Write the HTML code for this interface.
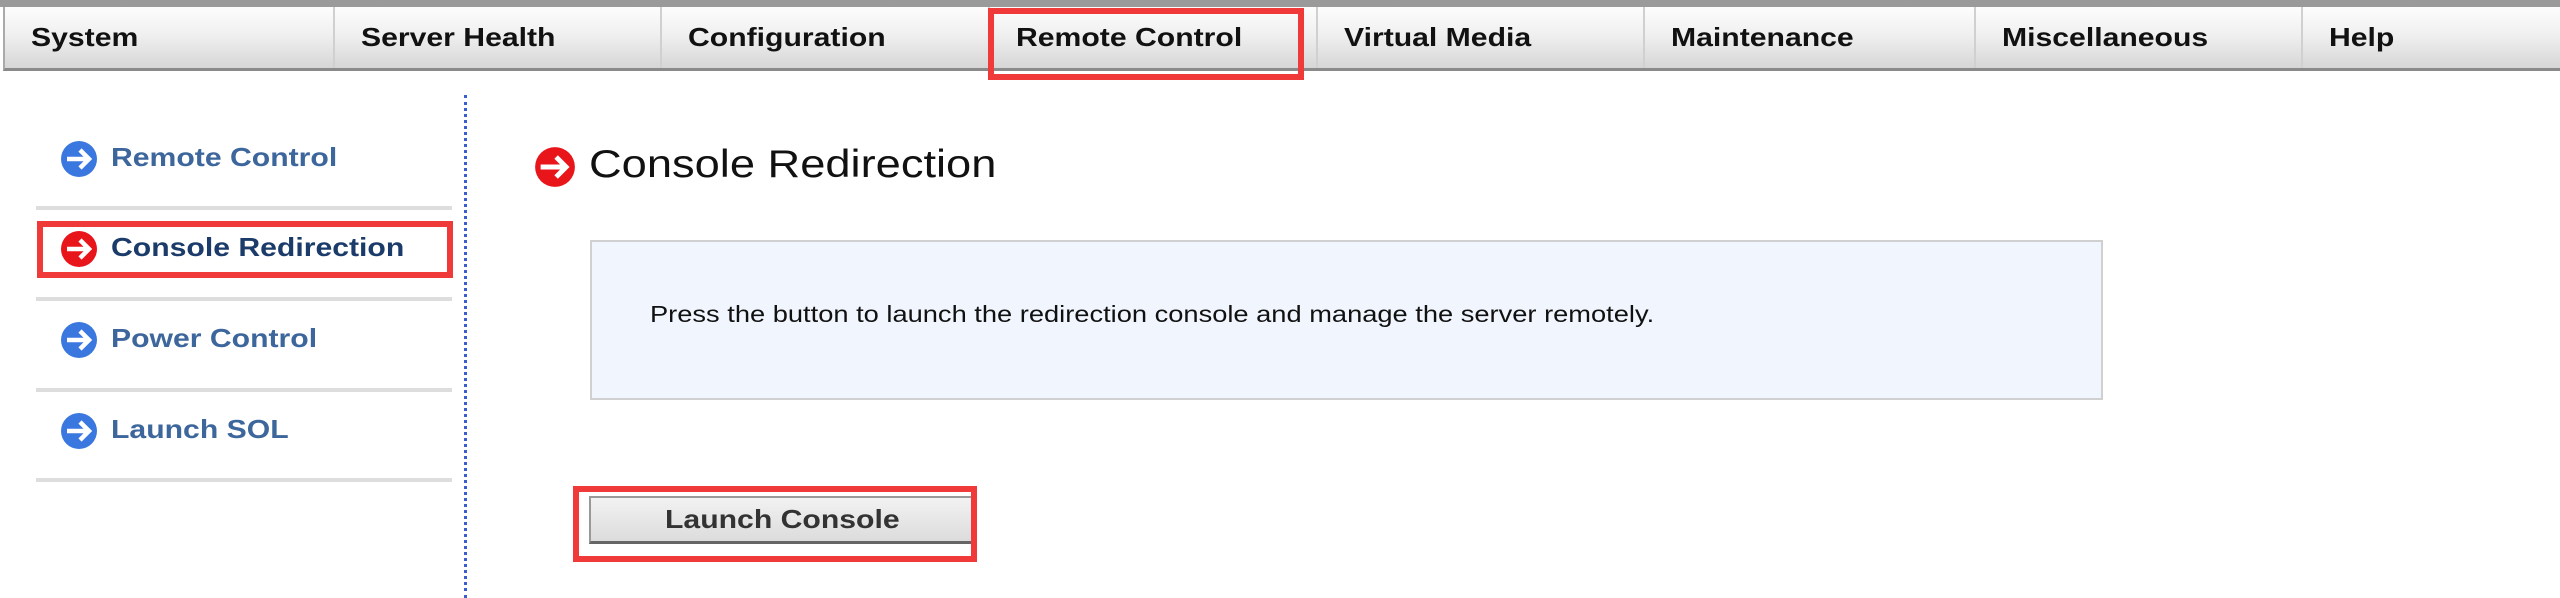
<!DOCTYPE html>
<html><head><meta charset="utf-8"><style>
*{margin:0;padding:0;box-sizing:border-box}
body{width:2560px;height:598px;background:#fff;position:relative;overflow:hidden;font-family:"Liberation Sans",Arial,sans-serif}
.w{display:inline-block;transform:scaleX(1.16);transform-origin:0 50%;white-space:nowrap}
.top{position:absolute;left:0;top:0;width:2560px;height:7px;background:#9a9a9a}
.nav{position:absolute;left:3px;top:7px;width:2557px;height:64px;background:linear-gradient(#fdfdfd,#f0f0f0 45%,#d6d6d6);border-bottom:3px solid #8a8a8a;border-left:2px solid #aaa}
.tab{position:absolute;top:7px;height:61px;line-height:60px;font-size:26px;font-weight:bold;color:#111;padding-left:26px;border-left:2px solid #d0d0d0;white-space:nowrap}
.red{position:absolute;border:6px solid #f03a3a}
.side{position:absolute;left:60px;font-size:26px;font-weight:bold;color:#3d679c;white-space:nowrap}
.sep{position:absolute;left:36px;width:416px;height:4px;background:#ddd}
.ic{position:absolute;width:38px;height:38px}
.dot{position:absolute;left:464px;top:95px;height:503px;border-left:3px dotted #3a5fcc}
</style></head><body>
<div class="top"></div>
<div class="nav"></div>
<div class="tab" style="left:5px;border-left:none"><span class="w">System</span></div>
<div class="tab" style="left:333px"><span class="w">Server Health</span></div>
<div class="tab" style="left:660px"><span class="w">Configuration</span></div>
<div class="tab" style="left:988px"><span class="w">Remote Control</span></div>
<div class="tab" style="left:1316px"><span class="w">Virtual Media</span></div>
<div class="tab" style="left:1643px"><span class="w">Maintenance</span></div>
<div class="tab" style="left:1974px"><span class="w">Miscellaneous</span></div>
<div class="tab" style="left:2301px"><span class="w">Help</span></div>
<div class="red" style="left:988px;top:8px;width:316px;height:72px"></div>

<svg class="ic" style="left:60px;top:140px" viewBox="0 0 38 38"><circle cx="19" cy="19" r="18" fill="#3a78e0"/><path d="M7 19H28M20 10L29 19L20 28" stroke="#fff" stroke-width="4.5" fill="none"/></svg>
<div class="side" style="left:111px;top:142px"><span class="w">Remote Control</span></div>
<div class="sep" style="top:206px"></div>
<svg class="ic" style="left:60px;top:230px" viewBox="0 0 38 38"><circle cx="19" cy="19" r="18" fill="#e8151b"/><path d="M7 19H28M20 10L29 19L20 28" stroke="#fff" stroke-width="4.5" fill="none"/></svg>
<div class="side" style="left:111px;top:232px;color:#1b3b6a"><span class="w">Console Redirection</span></div>
<div class="red" style="left:37px;top:221px;width:416px;height:57px"></div>
<div class="sep" style="top:297px"></div>
<svg class="ic" style="left:60px;top:321px" viewBox="0 0 38 38"><circle cx="19" cy="19" r="18" fill="#3a78e0"/><path d="M7 19H28M20 10L29 19L20 28" stroke="#fff" stroke-width="4.5" fill="none"/></svg>
<div class="side" style="left:111px;top:323px"><span class="w">Power Control</span></div>
<div class="sep" style="top:388px"></div>
<svg class="ic" style="left:60px;top:412px" viewBox="0 0 38 38"><circle cx="19" cy="19" r="18" fill="#3a78e0"/><path d="M7 19H28M20 10L29 19L20 28" stroke="#fff" stroke-width="4.5" fill="none"/></svg>
<div class="side" style="left:111px;top:414px"><span class="w">Launch SOL</span></div>
<div class="sep" style="top:478px"></div>
<div class="dot"></div>

<svg class="ic" style="left:534px;top:146px;width:42px;height:42px" viewBox="0 0 38 38"><circle cx="19" cy="19" r="18" fill="#e8151b"/><path d="M6 19H28M20 10L29 19L20 28" stroke="#fff" stroke-width="4.5" fill="none"/></svg>
<div style="position:absolute;left:589px;top:143px;font-size:39px;color:#111;white-space:nowrap"><span class="w">Console Redirection</span></div>

<div style="position:absolute;left:590px;top:240px;width:1513px;height:160px;background:#f0f5fe;border:2px solid #d0d0d0"></div>
<div style="position:absolute;left:650px;top:301px;font-size:23.5px;color:#111;white-space:nowrap"><span class="w">Press the button to launch the redirection console and manage the server remotely.</span></div>

<div style="position:absolute;left:589px;top:496px;width:385px;height:48px;background:linear-gradient(#f2f2f2,#dcdcdc);border:2px solid #999;border-bottom:3px solid #666;line-height:42px;font-size:26px;font-weight:bold;color:#333;white-space:nowrap"><span class="w" style="position:absolute;left:74px">Launch Console</span></div>
<div class="red" style="left:573px;top:486px;width:404px;height:76px"></div>
</body></html>
